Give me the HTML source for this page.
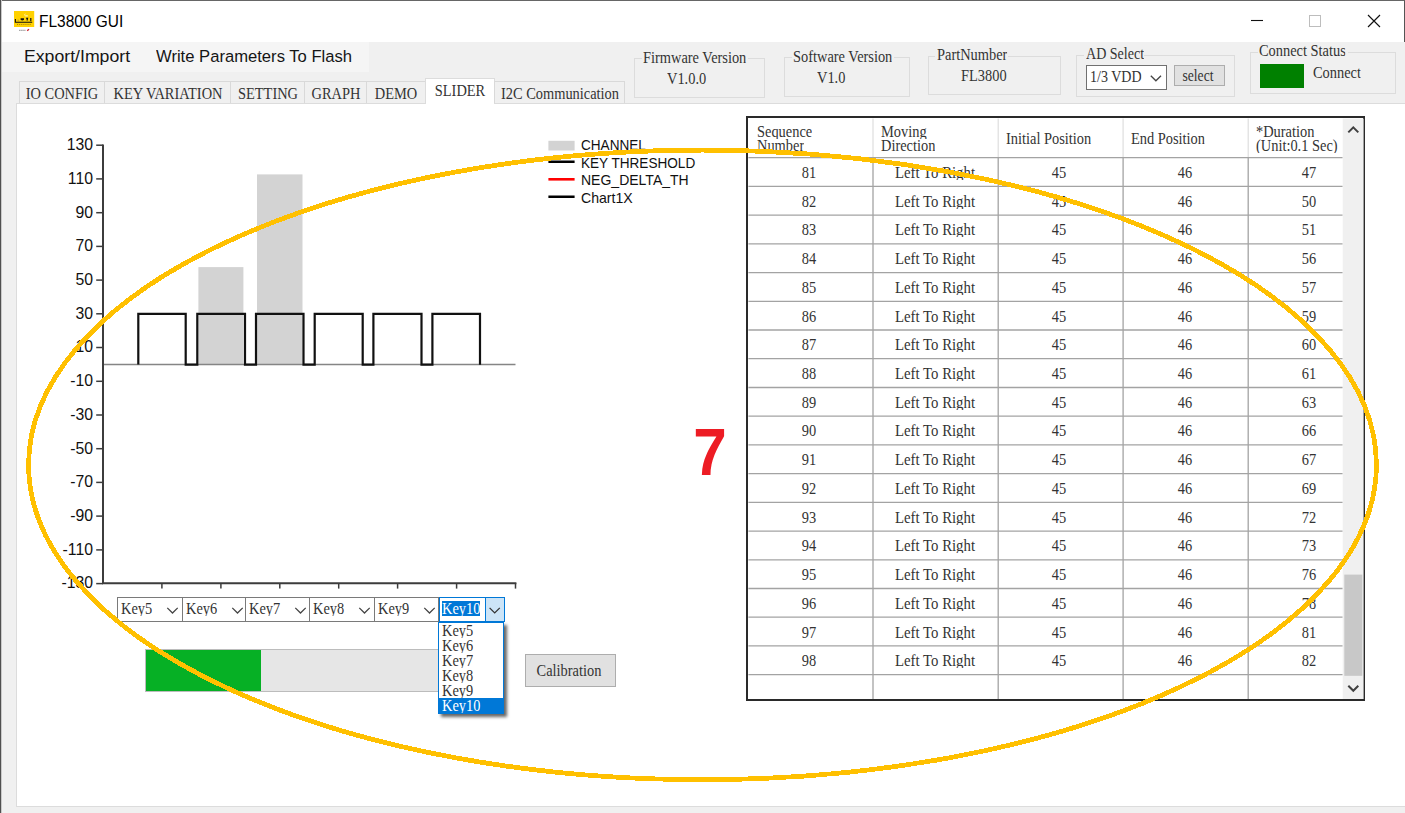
<!DOCTYPE html>
<html><head><meta charset="utf-8"><title>FL3800 GUI</title>
<style>
html,body{margin:0;padding:0}
body{width:1405px;height:813px;overflow:hidden;background:#f0f0f0;position:relative;color:#1a1a1a}
div{box-sizing:border-box}
.t{position:absolute;white-space:pre}
.f{font-family:"Liberation Serif","Noto Serif CJK SC",serif;color:#333}
.a{font-family:"Liberation Sans","Noto Sans CJK SC",sans-serif;color:#111}
.gb{position:absolute;border:1px solid #dcdcdc}
svg{position:absolute;left:0;top:0;overflow:visible}
</style></head><body>

<div style="position:absolute;left:0.0px;top:0.0px;width:1405.0px;height:42.0px;background:#fff;border-top:1px solid #666;border-right:1px solid #555;"></div>
<div style="position:absolute;left:0.0px;top:0.0px;width:2.0px;height:813.0px;background:#c9c9c9;"></div>
<div style="position:absolute;left:0.0px;top:0.0px;width:1.0px;height:813.0px;background:#505050;"></div>
<svg width="40" height="40" viewBox="0 0 40 40">
<rect x="14" y="11" width="20.2" height="16" fill="#ffd100"/>
<path d="M15.4 18.9V22.2H32.2" fill="none" stroke="#111" stroke-width="1.1"/>
<path d="M20.6 18.2h3.4v1.6q-1.7 1.6 -3.4 0z" fill="#111"/>
<path d="M18.2 19.6v1.6" stroke="#8a7a40" stroke-width="1" opacity=".6"/>
<path d="M26.2 18.3h1.3l-.5 2.2M30.8 18v3.2" fill="none" stroke="#111" stroke-width="1.2"/>
<path d="M24.2 15.2l1.2-1.1M25.2 15.9h2.6" stroke="#fff" stroke-width=".9" fill="none"/>
<path d="M17 24.4h14" stroke="#7a5200" stroke-width=".8" stroke-dasharray="1 .9" opacity=".8"/>
<path d="M19 30.3h6.8" stroke="#777" stroke-width=".8" stroke-dasharray="1.6 .5"/>
<path d="M27.2 30.8l1.8-1.6" stroke="#d0202a" stroke-width="1.3"/>
</svg>
<div class="t a" style="top:11.2px;height:22px;line-height:22px;font-size:16.8px;color:#000;left:38.7px;transform:scaleX(0.921);transform-origin:0 50%;">FL3800 GUI</div>
<svg width="1405" height="42" viewBox="0 0 1405 42">
<path d="M1251 20.5h12" stroke="#111" stroke-width="1.1"/>
<rect x="1309.5" y="15.5" width="11" height="11" fill="none" stroke="#bdbdbd" stroke-width="1"/>
<path d="M1368 15l12 12M1380 15l-12 12" stroke="#111" stroke-width="1.15"/>
</svg>
<div style="position:absolute;left:2.0px;top:42.0px;width:366.5px;height:30.0px;background:#f5f5f5;"></div>
<div class="t a" style="top:45.7px;height:22px;line-height:22px;font-size:16.8px;color:#151515;left:24.0px;transform:scaleX(1.053);transform-origin:0 50%;">Export/Import</div>
<div class="t a" style="top:45.7px;height:22px;line-height:22px;font-size:16.8px;color:#151515;left:155.8px;transform:scaleX(0.99);transform-origin:0 50%;">Write Parameters To Flash</div>
<div style="position:absolute;left:16.0px;top:103.0px;width:1400.0px;height:704.0px;background:#fff;border:1px solid #dcdcdc;"></div>
<div style="position:absolute;left:19.0px;top:81.0px;width:86.0px;height:22.0px;background:#f0f0f0;border:1px solid #d9d9d9;border-bottom:none;"></div>
<div class="t f" style="top:83.7px;height:20px;line-height:20px;font-size:16px;left:-138.0px;width:400px;text-align:center;transform:scaleX(0.9);transform-origin:50% 50%;overflow:hidden;height:17px;">IO CONFIG</div>
<div style="position:absolute;left:104.0px;top:81.0px;width:127.0px;height:22.0px;background:#f0f0f0;border:1px solid #d9d9d9;border-bottom:none;"></div>
<div class="t f" style="top:83.7px;height:20px;line-height:20px;font-size:16px;left:-32.5px;width:400px;text-align:center;transform:scaleX(0.9);transform-origin:50% 50%;overflow:hidden;height:17px;">KEY VARIATION</div>
<div style="position:absolute;left:230.0px;top:81.0px;width:75.0px;height:22.0px;background:#f0f0f0;border:1px solid #d9d9d9;border-bottom:none;"></div>
<div class="t f" style="top:83.7px;height:20px;line-height:20px;font-size:16px;left:67.5px;width:400px;text-align:center;transform:scaleX(0.9);transform-origin:50% 50%;overflow:hidden;height:17px;">SETTING</div>
<div style="position:absolute;left:304.0px;top:81.0px;width:63.0px;height:22.0px;background:#f0f0f0;border:1px solid #d9d9d9;border-bottom:none;"></div>
<div class="t f" style="top:83.7px;height:20px;line-height:20px;font-size:16px;left:135.5px;width:400px;text-align:center;transform:scaleX(0.9);transform-origin:50% 50%;overflow:hidden;height:17px;">GRAPH</div>
<div style="position:absolute;left:366.0px;top:81.0px;width:60.0px;height:22.0px;background:#f0f0f0;border:1px solid #d9d9d9;border-bottom:none;"></div>
<div class="t f" style="top:83.7px;height:20px;line-height:20px;font-size:16px;left:196.0px;width:400px;text-align:center;transform:scaleX(0.9);transform-origin:50% 50%;overflow:hidden;height:17px;">DEMO</div>
<div style="position:absolute;left:425.0px;top:78.0px;width:70.0px;height:26.0px;background:#fff;border:1px solid #dcdcdc;border-bottom:none;"></div>
<div class="t f" style="top:81.3px;height:20px;line-height:20px;font-size:16px;left:259.7px;width:400px;text-align:center;transform:scaleX(0.9);transform-origin:50% 50%;overflow:hidden;height:17px;">SLIDER</div>
<div style="position:absolute;left:494.0px;top:81.0px;width:131.0px;height:22.0px;background:#f0f0f0;border:1px solid #d9d9d9;border-bottom:none;"></div>
<div class="t f" style="top:83.7px;height:20px;line-height:20px;font-size:16px;left:359.5px;width:400px;text-align:center;transform:scaleX(0.9);transform-origin:50% 50%;overflow:hidden;height:17px;">I2C Communication</div>
<div class="gb" style="left:634px;top:58px;width:131px;height:40px"></div>
<div style="position:absolute;left:641.7px;top:58.0px;width:106.0px;height:1.0px;background:#f0f0f0;"></div>
<div class="t f" style="top:47.7px;height:20px;line-height:20px;font-size:16px;left:643.0px;transform:scaleX(0.9);transform-origin:0 50%;overflow:hidden;height:17px;">Firmware Version</div>
<div class="t f" style="top:69.0px;height:20px;line-height:20px;font-size:16px;left:667.3px;transform:scaleX(0.9);transform-origin:0 50%;overflow:hidden;height:17px;">V1.0.0</div>
<div class="gb" style="left:784px;top:57px;width:126px;height:40px"></div>
<div style="position:absolute;left:791.9px;top:57.0px;width:102.0px;height:1.0px;background:#f0f0f0;"></div>
<div class="t f" style="top:46.6px;height:20px;line-height:20px;font-size:16px;left:793.2px;transform:scaleX(0.9);transform-origin:0 50%;overflow:hidden;height:17px;">Software Version</div>
<div class="t f" style="top:67.6px;height:20px;line-height:20px;font-size:16px;left:817.3px;transform:scaleX(0.9);transform-origin:0 50%;overflow:hidden;height:17px;">V1.0</div>
<div class="gb" style="left:928px;top:56px;width:133px;height:39px"></div>
<div style="position:absolute;left:935.4px;top:56.0px;width:73.0px;height:1.0px;background:#f0f0f0;"></div>
<div class="t f" style="top:45.2px;height:20px;line-height:20px;font-size:16px;left:936.7px;transform:scaleX(0.9);transform-origin:0 50%;overflow:hidden;height:17px;">PartNumber</div>
<div class="t f" style="top:66.3px;height:20px;line-height:20px;font-size:16px;left:960.6px;transform:scaleX(0.9);transform-origin:0 50%;overflow:hidden;height:17px;">FL3800</div>
<div class="gb" style="left:1076px;top:55px;width:159px;height:42px"></div>
<div style="position:absolute;left:1084.3px;top:55.0px;width:60.0px;height:1.0px;background:#f0f0f0;"></div>
<div class="t f" style="top:44.0px;height:20px;line-height:20px;font-size:16px;left:1085.6px;transform:scaleX(0.877);transform-origin:0 50%;overflow:hidden;height:17px;">AD Select</div>
<div class="gb" style="left:1250px;top:52px;width:146px;height:42px"></div>
<div style="position:absolute;left:1257.9px;top:52.0px;width:90.0px;height:1.0px;background:#f0f0f0;"></div>
<div class="t f" style="top:41.2px;height:20px;line-height:20px;font-size:16px;left:1259.2px;transform:scaleX(0.9);transform-origin:0 50%;overflow:hidden;height:17px;">Connect Status</div>
<div style="position:absolute;left:1086.0px;top:65.0px;width:81.0px;height:25.0px;background:#fff;border:1px solid #707070;"></div>
<div class="t f" style="top:67.0px;height:20px;line-height:20px;font-size:16px;left:1089.9px;transform:scaleX(0.877);transform-origin:0 50%;overflow:hidden;height:17px;">1/3 VDD</div>
<svg width="1405" height="120"><path d="M1150.8 75.8l5.1 5 5.1-5" fill="none" stroke="#444" stroke-width="1.3"/></svg>
<div style="position:absolute;left:1174.0px;top:65.0px;width:51.0px;height:21.0px;background:#e1e1e1;border:1px solid #adadad;"></div>
<div class="t f" style="top:66.1px;height:20px;line-height:20px;font-size:16px;left:998.4px;width:400px;text-align:center;transform:scaleX(0.85);transform-origin:50% 50%;overflow:hidden;height:17px;">select</div>
<div style="position:absolute;left:1260.0px;top:64.0px;width:44.0px;height:24.0px;background:#008000;"></div>
<div class="t f" style="top:62.5px;height:20px;line-height:20px;font-size:16px;left:1312.8px;transform:scaleX(0.9);transform-origin:0 50%;overflow:hidden;height:17px;">Connect</div>
<svg width="1405" height="813" viewBox="0 0 1405 813">
<rect x="198.4" y="267.1" width="45" height="97.3" fill="#d3d3d3"/>
<rect x="257" y="174.4" width="45.5" height="190.0" fill="#d3d3d3"/>
<path d="M103 364.4H515.5" stroke="#858585" stroke-width="1.5"/>
<path d="M138.3 364.4V313.8H185.7V364.7H197.3V313.8H245.0V364.7H256.0V313.8H303.5V364.7H314.7V313.8H362.7V364.7H373.4V313.8H421.5V364.7H432.4V313.8H480.0V364.7" fill="none" stroke="#111" stroke-width="2.2" stroke-linejoin="miter"/>
<path d="M103 144.4V583.2H516.4" fill="none" stroke="#3c3c3c" stroke-width="2"/>
<path d="M96.2 145.2H103" stroke="#3c3c3c" stroke-width="1.5"/>
<path d="M96.2 178.9H103" stroke="#3c3c3c" stroke-width="1.5"/>
<path d="M96.2 212.7H103" stroke="#3c3c3c" stroke-width="1.5"/>
<path d="M96.2 246.4H103" stroke="#3c3c3c" stroke-width="1.5"/>
<path d="M96.2 280.1H103" stroke="#3c3c3c" stroke-width="1.5"/>
<path d="M96.2 313.8H103" stroke="#3c3c3c" stroke-width="1.5"/>
<path d="M96.2 347.5H103" stroke="#3c3c3c" stroke-width="1.5"/>
<path d="M96.2 381.3H103" stroke="#3c3c3c" stroke-width="1.5"/>
<path d="M96.2 415.0H103" stroke="#3c3c3c" stroke-width="1.5"/>
<path d="M96.2 448.7H103" stroke="#3c3c3c" stroke-width="1.5"/>
<path d="M96.2 482.4H103" stroke="#3c3c3c" stroke-width="1.5"/>
<path d="M96.2 516.1H103" stroke="#3c3c3c" stroke-width="1.5"/>
<path d="M96.2 549.9H103" stroke="#3c3c3c" stroke-width="1.5"/>
<path d="M96.2 583.6H103" stroke="#3c3c3c" stroke-width="1.5"/>
<path d="M161.9 583V588.6" stroke="#3c3c3c" stroke-width="1.5"/>
<path d="M220.9 583V588.6" stroke="#3c3c3c" stroke-width="1.5"/>
<path d="M279.8 583V588.6" stroke="#3c3c3c" stroke-width="1.5"/>
<path d="M338.7 583V588.6" stroke="#3c3c3c" stroke-width="1.5"/>
<path d="M397.6 583V588.6" stroke="#3c3c3c" stroke-width="1.5"/>
<path d="M456.6 583V588.6" stroke="#3c3c3c" stroke-width="1.5"/>
<path d="M515.5 583V588.6" stroke="#3c3c3c" stroke-width="1.5"/>
<rect x="548.4" y="140.8" width="26.2" height="9.7" fill="#d3d3d3"/>
<path d="M548.4 161.7h26.2M548.4 196.8h26.2" stroke="#000" stroke-width="2.6"/>
<path d="M548.4 179.3h26.2" stroke="#f00" stroke-width="2.6"/>
</svg>
<div class="t a" style="top:135.0px;height:20px;line-height:20px;font-size:16px;color:#111;left:-307.4px;width:400px;text-align:right;transform:scaleX(0.985);transform-origin:100% 50%;">130</div>
<div class="t a" style="top:168.7px;height:20px;line-height:20px;font-size:16px;color:#111;left:-307.4px;width:400px;text-align:right;transform:scaleX(0.985);transform-origin:100% 50%;">110</div>
<div class="t a" style="top:202.5px;height:20px;line-height:20px;font-size:16px;color:#111;left:-307.4px;width:400px;text-align:right;transform:scaleX(0.985);transform-origin:100% 50%;">90</div>
<div class="t a" style="top:236.2px;height:20px;line-height:20px;font-size:16px;color:#111;left:-307.4px;width:400px;text-align:right;transform:scaleX(0.985);transform-origin:100% 50%;">70</div>
<div class="t a" style="top:269.9px;height:20px;line-height:20px;font-size:16px;color:#111;left:-307.4px;width:400px;text-align:right;transform:scaleX(0.985);transform-origin:100% 50%;">50</div>
<div class="t a" style="top:303.6px;height:20px;line-height:20px;font-size:16px;color:#111;left:-307.4px;width:400px;text-align:right;transform:scaleX(0.985);transform-origin:100% 50%;">30</div>
<div class="t a" style="top:337.3px;height:20px;line-height:20px;font-size:16px;color:#111;left:-307.4px;width:400px;text-align:right;transform:scaleX(0.985);transform-origin:100% 50%;">10</div>
<div class="t a" style="top:371.1px;height:20px;line-height:20px;font-size:16px;color:#111;left:-307.4px;width:400px;text-align:right;transform:scaleX(0.985);transform-origin:100% 50%;">-10</div>
<div class="t a" style="top:404.8px;height:20px;line-height:20px;font-size:16px;color:#111;left:-307.4px;width:400px;text-align:right;transform:scaleX(0.985);transform-origin:100% 50%;">-30</div>
<div class="t a" style="top:438.5px;height:20px;line-height:20px;font-size:16px;color:#111;left:-307.4px;width:400px;text-align:right;transform:scaleX(0.985);transform-origin:100% 50%;">-50</div>
<div class="t a" style="top:472.2px;height:20px;line-height:20px;font-size:16px;color:#111;left:-307.4px;width:400px;text-align:right;transform:scaleX(0.985);transform-origin:100% 50%;">-70</div>
<div class="t a" style="top:505.9px;height:20px;line-height:20px;font-size:16px;color:#111;left:-307.4px;width:400px;text-align:right;transform:scaleX(0.985);transform-origin:100% 50%;">-90</div>
<div class="t a" style="top:539.7px;height:20px;line-height:20px;font-size:16px;color:#111;left:-307.4px;width:400px;text-align:right;transform:scaleX(0.985);transform-origin:100% 50%;">-110</div>
<div class="t a" style="top:573.4px;height:20px;line-height:20px;font-size:16px;color:#111;left:-307.4px;width:400px;text-align:right;transform:scaleX(0.985);transform-origin:100% 50%;">-130</div>
<div class="t a" style="top:134.9px;height:20px;line-height:20px;font-size:14.3px;color:#111;left:581.3px;transform:scaleX(0.95);transform-origin:0 50%;">CHANNEL</div>
<div class="t a" style="top:152.5px;height:20px;line-height:20px;font-size:14.3px;color:#111;left:581.3px;transform:scaleX(0.95);transform-origin:0 50%;">KEY THRESHOLD</div>
<div class="t a" style="top:170.0px;height:20px;line-height:20px;font-size:14.3px;color:#111;left:581.3px;transform:scaleX(0.98);transform-origin:0 50%;">NEG_DELTA_TH</div>
<div class="t a" style="top:187.6px;height:20px;line-height:20px;font-size:14.3px;color:#111;left:581.3px;transform:scaleX(0.985);transform-origin:0 50%;">Chart1X</div>
<div style="position:absolute;left:117.0px;top:597.0px;width:66.0px;height:25.0px;background:#fff;border:1px solid #7a7a7a;"></div>
<div class="t f" style="top:599.0px;height:20px;line-height:20px;font-size:16px;left:121.0px;transform:scaleX(0.9);transform-origin:0 50%;overflow:hidden;height:17px;">Key5</div>
<div style="position:absolute;left:182.0px;top:597.0px;width:64.0px;height:25.0px;background:#fff;border:1px solid #7a7a7a;"></div>
<div class="t f" style="top:599.0px;height:20px;line-height:20px;font-size:16px;left:186.0px;transform:scaleX(0.9);transform-origin:0 50%;overflow:hidden;height:17px;">Key6</div>
<div style="position:absolute;left:245.0px;top:597.0px;width:65.0px;height:25.0px;background:#fff;border:1px solid #7a7a7a;"></div>
<div class="t f" style="top:599.0px;height:20px;line-height:20px;font-size:16px;left:249.0px;transform:scaleX(0.9);transform-origin:0 50%;overflow:hidden;height:17px;">Key7</div>
<div style="position:absolute;left:309.0px;top:597.0px;width:66.0px;height:25.0px;background:#fff;border:1px solid #7a7a7a;"></div>
<div class="t f" style="top:599.0px;height:20px;line-height:20px;font-size:16px;left:313.0px;transform:scaleX(0.9);transform-origin:0 50%;overflow:hidden;height:17px;">Key8</div>
<div style="position:absolute;left:374.0px;top:597.0px;width:65.0px;height:25.0px;background:#fff;border:1px solid #7a7a7a;"></div>
<div class="t f" style="top:599.0px;height:20px;line-height:20px;font-size:16px;left:378.0px;transform:scaleX(0.9);transform-origin:0 50%;overflow:hidden;height:17px;">Key9</div>
<div style="position:absolute;left:145.0px;top:649.0px;width:300.0px;height:43.0px;background:#e6e6e6;border:1px solid #bcbcbc;"></div>
<div style="position:absolute;left:146.0px;top:650.0px;width:115.0px;height:41.0px;background:#06b025;"></div>
<div style="position:absolute;left:525.0px;top:654.0px;width:91.0px;height:33.0px;background:#e1e1e1;border:1px solid #adadad;"></div>
<div class="t f" style="top:660.6px;height:20px;line-height:20px;font-size:16px;left:369.3px;width:400px;text-align:center;transform:scaleX(0.9);transform-origin:50% 50%;overflow:hidden;height:17px;">Calibration</div>
<div style="position:absolute;left:746.2px;top:116.4px;width:619.0px;height:584.4px;background:#fff;border:2px solid #2a2a2a;overflow:hidden;"></div>
<svg width="1405" height="813" viewBox="0 0 1405 813">
<path d="M873.0 118.6V157.7" stroke="#dedede" stroke-width="1.2"/>
<path d="M873.0 157.7V699" stroke="#a3a3a3" stroke-width="1.3"/>
<path d="M998.2 118.6V157.7" stroke="#dedede" stroke-width="1.2"/>
<path d="M998.2 157.7V699" stroke="#a3a3a3" stroke-width="1.3"/>
<path d="M1123.1 118.6V157.7" stroke="#dedede" stroke-width="1.2"/>
<path d="M1123.1 157.7V699" stroke="#a3a3a3" stroke-width="1.3"/>
<path d="M1248.2 118.6V157.7" stroke="#dedede" stroke-width="1.2"/>
<path d="M1248.2 157.7V699" stroke="#a3a3a3" stroke-width="1.3"/>
<path d="M748.4 157.7H1342.7" stroke="#a3a3a3" stroke-width="1.3"/>
<path d="M748.4 186.4H1342.7" stroke="#a3a3a3" stroke-width="1.3"/>
<path d="M748.4 215.1H1342.7" stroke="#a3a3a3" stroke-width="1.3"/>
<path d="M748.4 243.9H1342.7" stroke="#a3a3a3" stroke-width="1.3"/>
<path d="M748.4 272.6H1342.7" stroke="#a3a3a3" stroke-width="1.3"/>
<path d="M748.4 301.3H1342.7" stroke="#a3a3a3" stroke-width="1.3"/>
<path d="M748.4 330.0H1342.7" stroke="#a3a3a3" stroke-width="1.3"/>
<path d="M748.4 358.7H1342.7" stroke="#a3a3a3" stroke-width="1.3"/>
<path d="M748.4 387.5H1342.7" stroke="#a3a3a3" stroke-width="1.3"/>
<path d="M748.4 416.2H1342.7" stroke="#a3a3a3" stroke-width="1.3"/>
<path d="M748.4 444.9H1342.7" stroke="#a3a3a3" stroke-width="1.3"/>
<path d="M748.4 473.6H1342.7" stroke="#a3a3a3" stroke-width="1.3"/>
<path d="M748.4 502.3H1342.7" stroke="#a3a3a3" stroke-width="1.3"/>
<path d="M748.4 531.1H1342.7" stroke="#a3a3a3" stroke-width="1.3"/>
<path d="M748.4 559.8H1342.7" stroke="#a3a3a3" stroke-width="1.3"/>
<path d="M748.4 588.5H1342.7" stroke="#a3a3a3" stroke-width="1.3"/>
<path d="M748.4 617.2H1342.7" stroke="#a3a3a3" stroke-width="1.3"/>
<path d="M748.4 645.9H1342.7" stroke="#a3a3a3" stroke-width="1.3"/>
<path d="M748.4 674.7H1342.7" stroke="#a3a3a3" stroke-width="1.3"/>
<rect x="1342.7" y="118.6" width="20.9" height="580.4" fill="#f0f0f0"/>
<rect x="1344.3" y="574.6" width="18" height="101.2" fill="#c8c8c8"/>
<path d="M1348.3 132.4l5 -5 5 5M1348.3 685.8l5 5 5-5" fill="none" stroke="#404040" stroke-width="2"/>
</svg>
<div class="t f" style="top:121.6px;height:20px;line-height:20px;font-size:16px;left:756.9px;transform:scaleX(0.9);transform-origin:0 50%;overflow:hidden;height:17px;">Sequence</div>
<div class="t f" style="top:135.9px;height:20px;line-height:20px;font-size:16px;left:756.9px;transform:scaleX(0.9);transform-origin:0 50%;overflow:hidden;height:17px;">Number</div>
<div class="t f" style="top:121.6px;height:20px;line-height:20px;font-size:16px;left:880.5px;transform:scaleX(0.9);transform-origin:0 50%;overflow:hidden;height:17px;">Moving</div>
<div class="t f" style="top:135.9px;height:20px;line-height:20px;font-size:16px;left:880.5px;transform:scaleX(0.9);transform-origin:0 50%;overflow:hidden;height:17px;">Direction</div>
<div class="t f" style="top:128.7px;height:20px;line-height:20px;font-size:16px;left:1005.5px;transform:scaleX(0.9);transform-origin:0 50%;overflow:hidden;height:17px;">Initial Position</div>
<div class="t f" style="top:128.7px;height:20px;line-height:20px;font-size:16px;left:1130.6px;transform:scaleX(0.9);transform-origin:0 50%;overflow:hidden;height:17px;">End Position</div>
<div class="t f" style="top:121.6px;height:20px;line-height:20px;font-size:16px;left:1255.7px;transform:scaleX(0.9);transform-origin:0 50%;overflow:hidden;height:17px;">*Duration</div>
<div class="t f" style="top:135.9px;height:20px;line-height:20px;font-size:16px;left:1255.7px;transform:scaleX(0.9);transform-origin:0 50%;overflow:hidden;height:17px;">(Unit:0.1 Sec)</div>
<div class="t f" style="top:163.0px;height:20px;line-height:20px;font-size:16px;left:609.2px;width:400px;text-align:center;transform:scaleX(0.9);transform-origin:50% 50%;overflow:hidden;height:17px;">81</div>
<div class="t f" style="top:163.0px;height:20px;line-height:20px;font-size:16px;left:734.8px;width:400px;text-align:center;transform:scaleX(0.925);transform-origin:50% 50%;overflow:hidden;height:17px;">Left To Right</div>
<div class="t f" style="top:163.0px;height:20px;line-height:20px;font-size:16px;left:859.4px;width:400px;text-align:center;transform:scaleX(0.9);transform-origin:50% 50%;overflow:hidden;height:17px;">45</div>
<div class="t f" style="top:163.0px;height:20px;line-height:20px;font-size:16px;left:984.6px;width:400px;text-align:center;transform:scaleX(0.9);transform-origin:50% 50%;overflow:hidden;height:17px;">46</div>
<div class="t f" style="top:163.0px;height:20px;line-height:20px;font-size:16px;left:1109.0px;width:400px;text-align:center;transform:scaleX(0.9);transform-origin:50% 50%;overflow:hidden;height:17px;">47</div>
<div class="t f" style="top:191.7px;height:20px;line-height:20px;font-size:16px;left:609.2px;width:400px;text-align:center;transform:scaleX(0.9);transform-origin:50% 50%;overflow:hidden;height:17px;">82</div>
<div class="t f" style="top:191.7px;height:20px;line-height:20px;font-size:16px;left:734.8px;width:400px;text-align:center;transform:scaleX(0.925);transform-origin:50% 50%;overflow:hidden;height:17px;">Left To Right</div>
<div class="t f" style="top:191.7px;height:20px;line-height:20px;font-size:16px;left:859.4px;width:400px;text-align:center;transform:scaleX(0.9);transform-origin:50% 50%;overflow:hidden;height:17px;">45</div>
<div class="t f" style="top:191.7px;height:20px;line-height:20px;font-size:16px;left:984.6px;width:400px;text-align:center;transform:scaleX(0.9);transform-origin:50% 50%;overflow:hidden;height:17px;">46</div>
<div class="t f" style="top:191.7px;height:20px;line-height:20px;font-size:16px;left:1109.0px;width:400px;text-align:center;transform:scaleX(0.9);transform-origin:50% 50%;overflow:hidden;height:17px;">50</div>
<div class="t f" style="top:220.4px;height:20px;line-height:20px;font-size:16px;left:609.2px;width:400px;text-align:center;transform:scaleX(0.9);transform-origin:50% 50%;overflow:hidden;height:17px;">83</div>
<div class="t f" style="top:220.4px;height:20px;line-height:20px;font-size:16px;left:734.8px;width:400px;text-align:center;transform:scaleX(0.925);transform-origin:50% 50%;overflow:hidden;height:17px;">Left To Right</div>
<div class="t f" style="top:220.4px;height:20px;line-height:20px;font-size:16px;left:859.4px;width:400px;text-align:center;transform:scaleX(0.9);transform-origin:50% 50%;overflow:hidden;height:17px;">45</div>
<div class="t f" style="top:220.4px;height:20px;line-height:20px;font-size:16px;left:984.6px;width:400px;text-align:center;transform:scaleX(0.9);transform-origin:50% 50%;overflow:hidden;height:17px;">46</div>
<div class="t f" style="top:220.4px;height:20px;line-height:20px;font-size:16px;left:1109.0px;width:400px;text-align:center;transform:scaleX(0.9);transform-origin:50% 50%;overflow:hidden;height:17px;">51</div>
<div class="t f" style="top:249.1px;height:20px;line-height:20px;font-size:16px;left:609.2px;width:400px;text-align:center;transform:scaleX(0.9);transform-origin:50% 50%;overflow:hidden;height:17px;">84</div>
<div class="t f" style="top:249.1px;height:20px;line-height:20px;font-size:16px;left:734.8px;width:400px;text-align:center;transform:scaleX(0.925);transform-origin:50% 50%;overflow:hidden;height:17px;">Left To Right</div>
<div class="t f" style="top:249.1px;height:20px;line-height:20px;font-size:16px;left:859.4px;width:400px;text-align:center;transform:scaleX(0.9);transform-origin:50% 50%;overflow:hidden;height:17px;">45</div>
<div class="t f" style="top:249.1px;height:20px;line-height:20px;font-size:16px;left:984.6px;width:400px;text-align:center;transform:scaleX(0.9);transform-origin:50% 50%;overflow:hidden;height:17px;">46</div>
<div class="t f" style="top:249.1px;height:20px;line-height:20px;font-size:16px;left:1109.0px;width:400px;text-align:center;transform:scaleX(0.9);transform-origin:50% 50%;overflow:hidden;height:17px;">56</div>
<div class="t f" style="top:277.8px;height:20px;line-height:20px;font-size:16px;left:609.2px;width:400px;text-align:center;transform:scaleX(0.9);transform-origin:50% 50%;overflow:hidden;height:17px;">85</div>
<div class="t f" style="top:277.8px;height:20px;line-height:20px;font-size:16px;left:734.8px;width:400px;text-align:center;transform:scaleX(0.925);transform-origin:50% 50%;overflow:hidden;height:17px;">Left To Right</div>
<div class="t f" style="top:277.8px;height:20px;line-height:20px;font-size:16px;left:859.4px;width:400px;text-align:center;transform:scaleX(0.9);transform-origin:50% 50%;overflow:hidden;height:17px;">45</div>
<div class="t f" style="top:277.8px;height:20px;line-height:20px;font-size:16px;left:984.6px;width:400px;text-align:center;transform:scaleX(0.9);transform-origin:50% 50%;overflow:hidden;height:17px;">46</div>
<div class="t f" style="top:277.8px;height:20px;line-height:20px;font-size:16px;left:1109.0px;width:400px;text-align:center;transform:scaleX(0.9);transform-origin:50% 50%;overflow:hidden;height:17px;">57</div>
<div class="t f" style="top:306.6px;height:20px;line-height:20px;font-size:16px;left:609.2px;width:400px;text-align:center;transform:scaleX(0.9);transform-origin:50% 50%;overflow:hidden;height:17px;">86</div>
<div class="t f" style="top:306.6px;height:20px;line-height:20px;font-size:16px;left:734.8px;width:400px;text-align:center;transform:scaleX(0.925);transform-origin:50% 50%;overflow:hidden;height:17px;">Left To Right</div>
<div class="t f" style="top:306.6px;height:20px;line-height:20px;font-size:16px;left:859.4px;width:400px;text-align:center;transform:scaleX(0.9);transform-origin:50% 50%;overflow:hidden;height:17px;">45</div>
<div class="t f" style="top:306.6px;height:20px;line-height:20px;font-size:16px;left:984.6px;width:400px;text-align:center;transform:scaleX(0.9);transform-origin:50% 50%;overflow:hidden;height:17px;">46</div>
<div class="t f" style="top:306.6px;height:20px;line-height:20px;font-size:16px;left:1109.0px;width:400px;text-align:center;transform:scaleX(0.9);transform-origin:50% 50%;overflow:hidden;height:17px;">59</div>
<div class="t f" style="top:335.3px;height:20px;line-height:20px;font-size:16px;left:609.2px;width:400px;text-align:center;transform:scaleX(0.9);transform-origin:50% 50%;overflow:hidden;height:17px;">87</div>
<div class="t f" style="top:335.3px;height:20px;line-height:20px;font-size:16px;left:734.8px;width:400px;text-align:center;transform:scaleX(0.925);transform-origin:50% 50%;overflow:hidden;height:17px;">Left To Right</div>
<div class="t f" style="top:335.3px;height:20px;line-height:20px;font-size:16px;left:859.4px;width:400px;text-align:center;transform:scaleX(0.9);transform-origin:50% 50%;overflow:hidden;height:17px;">45</div>
<div class="t f" style="top:335.3px;height:20px;line-height:20px;font-size:16px;left:984.6px;width:400px;text-align:center;transform:scaleX(0.9);transform-origin:50% 50%;overflow:hidden;height:17px;">46</div>
<div class="t f" style="top:335.3px;height:20px;line-height:20px;font-size:16px;left:1109.0px;width:400px;text-align:center;transform:scaleX(0.9);transform-origin:50% 50%;overflow:hidden;height:17px;">60</div>
<div class="t f" style="top:364.0px;height:20px;line-height:20px;font-size:16px;left:609.2px;width:400px;text-align:center;transform:scaleX(0.9);transform-origin:50% 50%;overflow:hidden;height:17px;">88</div>
<div class="t f" style="top:364.0px;height:20px;line-height:20px;font-size:16px;left:734.8px;width:400px;text-align:center;transform:scaleX(0.925);transform-origin:50% 50%;overflow:hidden;height:17px;">Left To Right</div>
<div class="t f" style="top:364.0px;height:20px;line-height:20px;font-size:16px;left:859.4px;width:400px;text-align:center;transform:scaleX(0.9);transform-origin:50% 50%;overflow:hidden;height:17px;">45</div>
<div class="t f" style="top:364.0px;height:20px;line-height:20px;font-size:16px;left:984.6px;width:400px;text-align:center;transform:scaleX(0.9);transform-origin:50% 50%;overflow:hidden;height:17px;">46</div>
<div class="t f" style="top:364.0px;height:20px;line-height:20px;font-size:16px;left:1109.0px;width:400px;text-align:center;transform:scaleX(0.9);transform-origin:50% 50%;overflow:hidden;height:17px;">61</div>
<div class="t f" style="top:392.7px;height:20px;line-height:20px;font-size:16px;left:609.2px;width:400px;text-align:center;transform:scaleX(0.9);transform-origin:50% 50%;overflow:hidden;height:17px;">89</div>
<div class="t f" style="top:392.7px;height:20px;line-height:20px;font-size:16px;left:734.8px;width:400px;text-align:center;transform:scaleX(0.925);transform-origin:50% 50%;overflow:hidden;height:17px;">Left To Right</div>
<div class="t f" style="top:392.7px;height:20px;line-height:20px;font-size:16px;left:859.4px;width:400px;text-align:center;transform:scaleX(0.9);transform-origin:50% 50%;overflow:hidden;height:17px;">45</div>
<div class="t f" style="top:392.7px;height:20px;line-height:20px;font-size:16px;left:984.6px;width:400px;text-align:center;transform:scaleX(0.9);transform-origin:50% 50%;overflow:hidden;height:17px;">46</div>
<div class="t f" style="top:392.7px;height:20px;line-height:20px;font-size:16px;left:1109.0px;width:400px;text-align:center;transform:scaleX(0.9);transform-origin:50% 50%;overflow:hidden;height:17px;">63</div>
<div class="t f" style="top:421.4px;height:20px;line-height:20px;font-size:16px;left:609.2px;width:400px;text-align:center;transform:scaleX(0.9);transform-origin:50% 50%;overflow:hidden;height:17px;">90</div>
<div class="t f" style="top:421.4px;height:20px;line-height:20px;font-size:16px;left:734.8px;width:400px;text-align:center;transform:scaleX(0.925);transform-origin:50% 50%;overflow:hidden;height:17px;">Left To Right</div>
<div class="t f" style="top:421.4px;height:20px;line-height:20px;font-size:16px;left:859.4px;width:400px;text-align:center;transform:scaleX(0.9);transform-origin:50% 50%;overflow:hidden;height:17px;">45</div>
<div class="t f" style="top:421.4px;height:20px;line-height:20px;font-size:16px;left:984.6px;width:400px;text-align:center;transform:scaleX(0.9);transform-origin:50% 50%;overflow:hidden;height:17px;">46</div>
<div class="t f" style="top:421.4px;height:20px;line-height:20px;font-size:16px;left:1109.0px;width:400px;text-align:center;transform:scaleX(0.9);transform-origin:50% 50%;overflow:hidden;height:17px;">66</div>
<div class="t f" style="top:450.2px;height:20px;line-height:20px;font-size:16px;left:609.2px;width:400px;text-align:center;transform:scaleX(0.9);transform-origin:50% 50%;overflow:hidden;height:17px;">91</div>
<div class="t f" style="top:450.2px;height:20px;line-height:20px;font-size:16px;left:734.8px;width:400px;text-align:center;transform:scaleX(0.925);transform-origin:50% 50%;overflow:hidden;height:17px;">Left To Right</div>
<div class="t f" style="top:450.2px;height:20px;line-height:20px;font-size:16px;left:859.4px;width:400px;text-align:center;transform:scaleX(0.9);transform-origin:50% 50%;overflow:hidden;height:17px;">45</div>
<div class="t f" style="top:450.2px;height:20px;line-height:20px;font-size:16px;left:984.6px;width:400px;text-align:center;transform:scaleX(0.9);transform-origin:50% 50%;overflow:hidden;height:17px;">46</div>
<div class="t f" style="top:450.2px;height:20px;line-height:20px;font-size:16px;left:1109.0px;width:400px;text-align:center;transform:scaleX(0.9);transform-origin:50% 50%;overflow:hidden;height:17px;">67</div>
<div class="t f" style="top:478.9px;height:20px;line-height:20px;font-size:16px;left:609.2px;width:400px;text-align:center;transform:scaleX(0.9);transform-origin:50% 50%;overflow:hidden;height:17px;">92</div>
<div class="t f" style="top:478.9px;height:20px;line-height:20px;font-size:16px;left:734.8px;width:400px;text-align:center;transform:scaleX(0.925);transform-origin:50% 50%;overflow:hidden;height:17px;">Left To Right</div>
<div class="t f" style="top:478.9px;height:20px;line-height:20px;font-size:16px;left:859.4px;width:400px;text-align:center;transform:scaleX(0.9);transform-origin:50% 50%;overflow:hidden;height:17px;">45</div>
<div class="t f" style="top:478.9px;height:20px;line-height:20px;font-size:16px;left:984.6px;width:400px;text-align:center;transform:scaleX(0.9);transform-origin:50% 50%;overflow:hidden;height:17px;">46</div>
<div class="t f" style="top:478.9px;height:20px;line-height:20px;font-size:16px;left:1109.0px;width:400px;text-align:center;transform:scaleX(0.9);transform-origin:50% 50%;overflow:hidden;height:17px;">69</div>
<div class="t f" style="top:507.6px;height:20px;line-height:20px;font-size:16px;left:609.2px;width:400px;text-align:center;transform:scaleX(0.9);transform-origin:50% 50%;overflow:hidden;height:17px;">93</div>
<div class="t f" style="top:507.6px;height:20px;line-height:20px;font-size:16px;left:734.8px;width:400px;text-align:center;transform:scaleX(0.925);transform-origin:50% 50%;overflow:hidden;height:17px;">Left To Right</div>
<div class="t f" style="top:507.6px;height:20px;line-height:20px;font-size:16px;left:859.4px;width:400px;text-align:center;transform:scaleX(0.9);transform-origin:50% 50%;overflow:hidden;height:17px;">45</div>
<div class="t f" style="top:507.6px;height:20px;line-height:20px;font-size:16px;left:984.6px;width:400px;text-align:center;transform:scaleX(0.9);transform-origin:50% 50%;overflow:hidden;height:17px;">46</div>
<div class="t f" style="top:507.6px;height:20px;line-height:20px;font-size:16px;left:1109.0px;width:400px;text-align:center;transform:scaleX(0.9);transform-origin:50% 50%;overflow:hidden;height:17px;">72</div>
<div class="t f" style="top:536.3px;height:20px;line-height:20px;font-size:16px;left:609.2px;width:400px;text-align:center;transform:scaleX(0.9);transform-origin:50% 50%;overflow:hidden;height:17px;">94</div>
<div class="t f" style="top:536.3px;height:20px;line-height:20px;font-size:16px;left:734.8px;width:400px;text-align:center;transform:scaleX(0.925);transform-origin:50% 50%;overflow:hidden;height:17px;">Left To Right</div>
<div class="t f" style="top:536.3px;height:20px;line-height:20px;font-size:16px;left:859.4px;width:400px;text-align:center;transform:scaleX(0.9);transform-origin:50% 50%;overflow:hidden;height:17px;">45</div>
<div class="t f" style="top:536.3px;height:20px;line-height:20px;font-size:16px;left:984.6px;width:400px;text-align:center;transform:scaleX(0.9);transform-origin:50% 50%;overflow:hidden;height:17px;">46</div>
<div class="t f" style="top:536.3px;height:20px;line-height:20px;font-size:16px;left:1109.0px;width:400px;text-align:center;transform:scaleX(0.9);transform-origin:50% 50%;overflow:hidden;height:17px;">73</div>
<div class="t f" style="top:565.0px;height:20px;line-height:20px;font-size:16px;left:609.2px;width:400px;text-align:center;transform:scaleX(0.9);transform-origin:50% 50%;overflow:hidden;height:17px;">95</div>
<div class="t f" style="top:565.0px;height:20px;line-height:20px;font-size:16px;left:734.8px;width:400px;text-align:center;transform:scaleX(0.925);transform-origin:50% 50%;overflow:hidden;height:17px;">Left To Right</div>
<div class="t f" style="top:565.0px;height:20px;line-height:20px;font-size:16px;left:859.4px;width:400px;text-align:center;transform:scaleX(0.9);transform-origin:50% 50%;overflow:hidden;height:17px;">45</div>
<div class="t f" style="top:565.0px;height:20px;line-height:20px;font-size:16px;left:984.6px;width:400px;text-align:center;transform:scaleX(0.9);transform-origin:50% 50%;overflow:hidden;height:17px;">46</div>
<div class="t f" style="top:565.0px;height:20px;line-height:20px;font-size:16px;left:1109.0px;width:400px;text-align:center;transform:scaleX(0.9);transform-origin:50% 50%;overflow:hidden;height:17px;">76</div>
<div class="t f" style="top:593.8px;height:20px;line-height:20px;font-size:16px;left:609.2px;width:400px;text-align:center;transform:scaleX(0.9);transform-origin:50% 50%;overflow:hidden;height:17px;">96</div>
<div class="t f" style="top:593.8px;height:20px;line-height:20px;font-size:16px;left:734.8px;width:400px;text-align:center;transform:scaleX(0.925);transform-origin:50% 50%;overflow:hidden;height:17px;">Left To Right</div>
<div class="t f" style="top:593.8px;height:20px;line-height:20px;font-size:16px;left:859.4px;width:400px;text-align:center;transform:scaleX(0.9);transform-origin:50% 50%;overflow:hidden;height:17px;">45</div>
<div class="t f" style="top:593.8px;height:20px;line-height:20px;font-size:16px;left:984.6px;width:400px;text-align:center;transform:scaleX(0.9);transform-origin:50% 50%;overflow:hidden;height:17px;">46</div>
<div class="t f" style="top:593.8px;height:20px;line-height:20px;font-size:16px;left:1109.0px;width:400px;text-align:center;transform:scaleX(0.9);transform-origin:50% 50%;overflow:hidden;height:17px;">78</div>
<div class="t f" style="top:622.5px;height:20px;line-height:20px;font-size:16px;left:609.2px;width:400px;text-align:center;transform:scaleX(0.9);transform-origin:50% 50%;overflow:hidden;height:17px;">97</div>
<div class="t f" style="top:622.5px;height:20px;line-height:20px;font-size:16px;left:734.8px;width:400px;text-align:center;transform:scaleX(0.925);transform-origin:50% 50%;overflow:hidden;height:17px;">Left To Right</div>
<div class="t f" style="top:622.5px;height:20px;line-height:20px;font-size:16px;left:859.4px;width:400px;text-align:center;transform:scaleX(0.9);transform-origin:50% 50%;overflow:hidden;height:17px;">45</div>
<div class="t f" style="top:622.5px;height:20px;line-height:20px;font-size:16px;left:984.6px;width:400px;text-align:center;transform:scaleX(0.9);transform-origin:50% 50%;overflow:hidden;height:17px;">46</div>
<div class="t f" style="top:622.5px;height:20px;line-height:20px;font-size:16px;left:1109.0px;width:400px;text-align:center;transform:scaleX(0.9);transform-origin:50% 50%;overflow:hidden;height:17px;">81</div>
<div class="t f" style="top:651.2px;height:20px;line-height:20px;font-size:16px;left:609.2px;width:400px;text-align:center;transform:scaleX(0.9);transform-origin:50% 50%;overflow:hidden;height:17px;">98</div>
<div class="t f" style="top:651.2px;height:20px;line-height:20px;font-size:16px;left:734.8px;width:400px;text-align:center;transform:scaleX(0.925);transform-origin:50% 50%;overflow:hidden;height:17px;">Left To Right</div>
<div class="t f" style="top:651.2px;height:20px;line-height:20px;font-size:16px;left:859.4px;width:400px;text-align:center;transform:scaleX(0.9);transform-origin:50% 50%;overflow:hidden;height:17px;">45</div>
<div class="t f" style="top:651.2px;height:20px;line-height:20px;font-size:16px;left:984.6px;width:400px;text-align:center;transform:scaleX(0.9);transform-origin:50% 50%;overflow:hidden;height:17px;">46</div>
<div class="t f" style="top:651.2px;height:20px;line-height:20px;font-size:16px;left:1109.0px;width:400px;text-align:center;transform:scaleX(0.9);transform-origin:50% 50%;overflow:hidden;height:17px;">82</div>
<div style="position:absolute;left:439.0px;top:597.0px;width:66.0px;height:25.0px;background:#fff;border:1px solid #0078d7;"></div>
<div style="position:absolute;left:485.0px;top:597.0px;width:20.0px;height:25.0px;background:#cce4f7;border:1px solid #0078d7;"></div>
<div style="position:absolute;left:442.0px;top:601.0px;width:38.0px;height:15.0px;background:#0078d7;"></div>
<div class="t f" style="top:599.0px;height:20px;line-height:20px;font-size:16px;color:#fff;left:441.9px;transform:scaleX(0.9);transform-origin:0 50%;overflow:hidden;height:17px;">Key10</div>
<div style="position:absolute;left:438.0px;top:622.0px;width:66.0px;height:92.0px;background:#fff;border:1px solid #0078d7;box-shadow:3px 3px 3px rgba(0,0,0,.6);"></div>
<div style="position:absolute;left:439.0px;top:698.0px;width:64.0px;height:15.0px;background:#0078d7;"></div>
<div class="t f" style="top:620.6px;height:20px;line-height:20px;font-size:16px;left:441.6px;transform:scaleX(0.9);transform-origin:0 50%;overflow:hidden;height:17px;">Key5</div>
<div class="t f" style="top:635.6px;height:20px;line-height:20px;font-size:16px;left:441.6px;transform:scaleX(0.9);transform-origin:0 50%;overflow:hidden;height:17px;">Key6</div>
<div class="t f" style="top:650.6px;height:20px;line-height:20px;font-size:16px;left:441.6px;transform:scaleX(0.9);transform-origin:0 50%;overflow:hidden;height:17px;">Key7</div>
<div class="t f" style="top:665.6px;height:20px;line-height:20px;font-size:16px;left:441.6px;transform:scaleX(0.9);transform-origin:0 50%;overflow:hidden;height:17px;">Key8</div>
<div class="t f" style="top:680.6px;height:20px;line-height:20px;font-size:16px;left:441.6px;transform:scaleX(0.9);transform-origin:0 50%;overflow:hidden;height:17px;">Key9</div>
<div class="t f" style="top:695.6px;height:20px;line-height:20px;font-size:16px;color:#fff;left:441.6px;transform:scaleX(0.9);transform-origin:0 50%;overflow:hidden;height:17px;">Key10</div>
<svg width="1405" height="813"><path d="M167.3 607.9l5.2 5.1 5.2-5.1" fill="none" stroke="#444" stroke-width="1.3"/><path d="M232.3 607.9l5.2 5.1 5.2-5.1" fill="none" stroke="#444" stroke-width="1.3"/><path d="M295.3 607.9l5.2 5.1 5.2-5.1" fill="none" stroke="#444" stroke-width="1.3"/><path d="M359.3 607.9l5.2 5.1 5.2-5.1" fill="none" stroke="#444" stroke-width="1.3"/><path d="M424.3 607.9l5.2 5.1 5.2-5.1" fill="none" stroke="#444" stroke-width="1.3"/><path d="M489.6 607.9l5.1 5 5.1-5" fill="none" stroke="#333" stroke-width="1.3"/></svg>
<svg width="1405" height="813" viewBox="0 0 1405 813"><ellipse cx="702.5" cy="464.9" rx="673.9" ry="314.8" fill="none" stroke="#ffc000" stroke-width="4.8" shape-rendering="crispEdges"/></svg>
<div class="t a" style="top:416.7px;height:70px;line-height:70px;font-size:66.3px;color:#ed1c24;left:509.9px;width:400px;text-align:center;transform:scaleX(0.908);transform-origin:50% 50%;font-weight:bold;">7</div>
</body></html>
